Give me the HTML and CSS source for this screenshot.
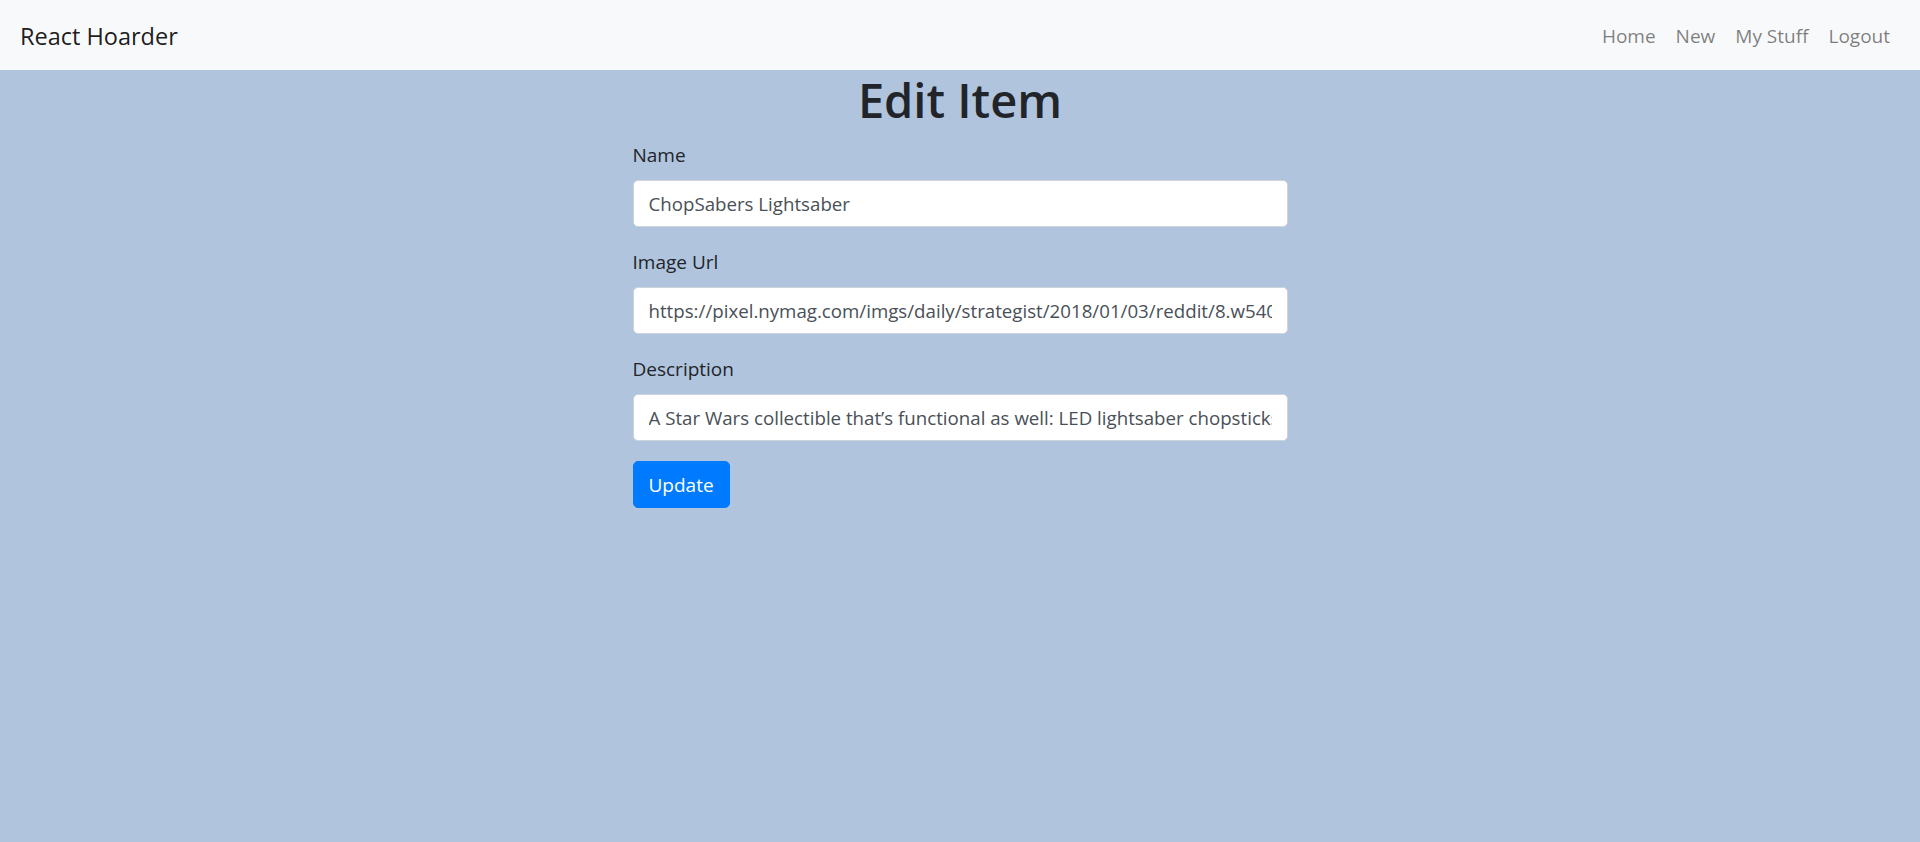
FILE: index.html
```html
<!DOCTYPE html>
<html lang="en">
<head>
<meta charset="utf-8">
<title>React Hoarder</title>
<link rel="stylesheet" href="styles.css">
</head>
<body>
<nav class="navbar">
  <a class="brand" href="#">React Hoarder</a>
  <ul class="nav-links">
    <li><a href="#">Home</a></li>
    <li><a href="#">New</a></li>
    <li><a href="#">My Stuff</a></li>
    <li><a href="#">Logout</a></li>
  </ul>
</nav>
<main class="page">
  <h1 class="title">Edit Item</h1>
  <form class="edit-form">
    <div class="form-group">
      <label for="name">Name</label>
      <input id="name" class="form-control" type="text" value="ChopSabers Lightsaber">
    </div>
    <div class="form-group">
      <label for="imageUrl">Image Url</label>
      <input id="imageUrl" class="form-control" type="text" value="https://pixel.nymag.com/imgs/daily/strategist/2018/01/03/reddit/8.w540.h360.jpg">
    </div>
    <div class="form-group">
      <label for="description">Description</label>
      <input id="description" class="form-control" type="text" value="A Star Wars collectible that’s functional as well: LED lightsaber chopsticks that light up.">
    </div>
    <button type="button" class="btn-primary">Update</button>
  </form>
</main>
</body>
</html>
```

FILE: styles.css
```css
* { box-sizing: border-box; }
html, body { margin: 0; padding: 0; }
body {
  background: #b0c4de;
  font-family: "Open Sans", "Noto Sans", "Liberation Sans", sans-serif;
  font-size: 20px;
  line-height: 1.5;
  color: #212529;
  min-height: 842px;
}
a { text-decoration: none; }

.navbar {
  height: 70px;
  background: #f8f9fa;
  display: flex;
  align-items: center;
  justify-content: space-between;
  padding: 2px 20px 0;
}
.brand {
  font-size: 23.5px;
  color: rgba(0,0,0,.9);
  line-height: 37px;
}
.nav-links {
  list-style: none;
  margin: 0;
  padding: 0;
  display: flex;
}
.nav-links a {
  display: block;
  padding: 0 10px;
  color: rgba(0,0,0,.5);
  font-size: 19px;
}

.title {
  margin: 0 0 10px;
  text-align: center;
  font-size: 47px;
  font-weight: 600;
  line-height: 60px;
}
.edit-form {
  width: 655px;
  margin: 0 auto;
}
.form-group { margin-bottom: 20px; }
.form-group label {
  display: block;
  margin-bottom: 10px;
  font-size: 19px;
  line-height: 30px;
}
.form-control {
  display: block;
  width: 100%;
  height: 47px;
  padding: 7px 15px;
  font-family: inherit;
  font-size: 18.7px;
  line-height: 30px;
  color: #495057;
  background: #fff;
  border: 1px solid #ced4da;
  border-radius: 5px;
}
.btn-primary {
  display: inline-block;
  height: 47px;
  padding: 7px 15px;
  font-family: inherit;
  font-size: 19px;
  line-height: 30px;
  color: #fff;
  background: #007bff;
  border: 1px solid #007bff;
  border-radius: 5px;
}
```
